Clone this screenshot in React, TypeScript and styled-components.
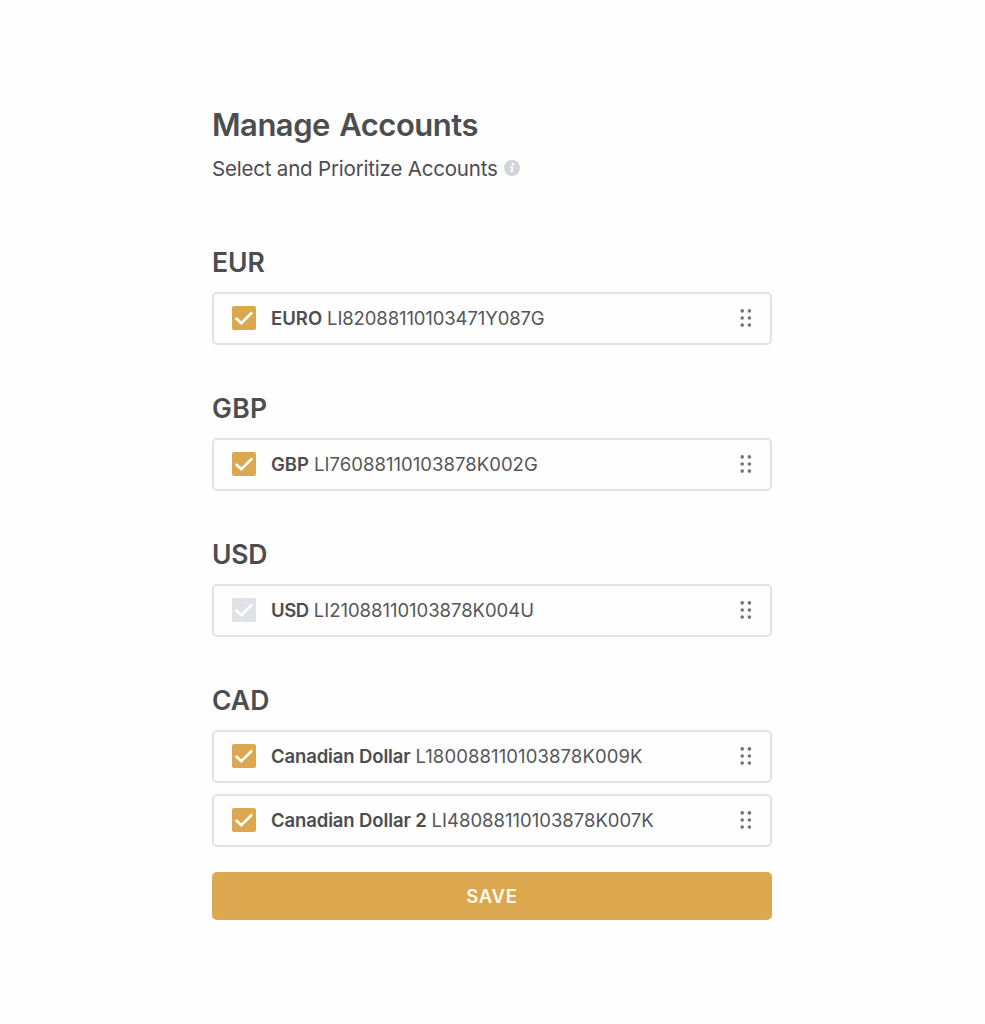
import React from "react";
import styled, { createGlobalStyle } from "styled-components";

const GlobalStyle = createGlobalStyle`
  *, *::before, *::after { box-sizing: border-box; }
  html, body { margin: 0; background: #fefefe; }
  body {
    font-family: Inter, "Liberation Sans", sans-serif;
    color: #4c4d50;
    -webkit-font-smoothing: antialiased;
  }
`;

const Page = styled.main`
  min-height: 1024px;
  padding: 105px 0 0 212px;
`;

const Panel = styled.div`
  width: 560px;
`;

const Title = styled.h1`
  margin: 0;
  font-size: 31px;
  line-height: 40px;
  font-weight: 600;
  letter-spacing: -0.5px;
  word-spacing: 2px;
  white-space: nowrap;
`;

const Subtitle = styled.div`
  display: flex;
  align-items: center;
  gap: 6px;
  height: 30px;
  margin: 8px 0 59px;
  font-size: 20.5px;
  letter-spacing: -0.19px;
  white-space: nowrap;
`;

const Section = styled.section`
  margin-bottom: 43px;

  &:last-of-type {
    margin-bottom: 25px;
  }
`;

const Heading = styled.h2<{ $spacing: number }>`
  margin: 0 0 10px;
  font-size: 26.5px;
  line-height: 40px;
  font-weight: 600;
  letter-spacing: ${(p) => p.$spacing}px;
`;

const Rows = styled.div`
  display: grid;
  gap: 11px;
`;

const Row = styled.label`
  display: flex;
  align-items: center;
  height: 53px;
  padding: 0 17px 1px 18px;
  border: 2px solid #e2e3e4;
  border-radius: 5px;
`;

const Check = styled.span<{ $on: boolean }>`
  display: flex;
  width: 24px;
  height: 24px;
  margin-right: 15px;
  border-radius: 2px;
  background: ${(p) => (p.$on ? "#dba84f" : "#e1e2e8")};
`;

const Name = styled.span<{ $spacing: number }>`
  margin-right: 5px;
  font-size: 18.5px;
  font-weight: 600;
  letter-spacing: ${(p) => p.$spacing}px;
  white-space: nowrap;
`;

const AccountNumber = styled.span<{ $spacing: number }>`
  flex: 1;
  font-size: 18.5px;
  color: #55565a;
  letter-spacing: ${(p) => p.$spacing}px;
  white-space: nowrap;
`;

const SaveButton = styled.button`
  display: block;
  width: 100%;
  height: 48px;
  padding: 0;
  border: 0;
  border-radius: 5px;
  background: #dba84f;
  color: #fffaf0;
  font: 600 18.5px/48px Inter, "Liberation Sans", sans-serif;
  letter-spacing: 0.7px;
`;

const CheckIcon = () => (
  <svg width="24" height="24" viewBox="0 0 24 24" fill="none">
    <path d="M3.8 12 9.3 17.2 20.2 6.4" stroke="#fff" strokeWidth="2.7" />
  </svg>
);

const InfoIcon = () => (
  <svg width="16" height="16" viewBox="0 0 16 16">
    <circle cx="8" cy="8" r="8" fill="#d3d4d7" />
    <circle cx="8.9" cy="4.1" r="1.25" fill="#fff" />
    <path d="M6.3 7h2.2l-1 4.6h1.6" stroke="#fff" strokeWidth="1.5" fill="none" />
  </svg>
);

const DragHandle = () => (
  <svg width="14" height="20" viewBox="0 0 14 20" fill="#737477">
    {[3.2, 10.4].map((x) => [2.9, 10, 17.1].map((y) => <circle key={`${x}-${y}`} cx={x} cy={y} r="1.8" />))}
  </svg>
);

type Account = { name: string; number: string; on: boolean; nameSpacing: number; numberSpacing: number };

const groups: { currency: string; spacing: number; accounts: Account[] }[] = [
  { currency: "EUR", spacing: 0, accounts: [{ name: "EURO", number: "LI82088110103471Y087G", on: true, nameSpacing: 0, numberSpacing: -0.12 }] },
  { currency: "GBP", spacing: 0.4, accounts: [{ name: "GBP", number: "LI76088110103878K002G", on: true, nameSpacing: 0, numberSpacing: 0.04 }] },
  { currency: "USD", spacing: -0.3, accounts: [{ name: "USD", number: "LI21088110103878K004U", on: false, nameSpacing: -0.4, numberSpacing: -0.03 }] },
  {
    currency: "CAD",
    spacing: 0,
    accounts: [
      { name: "Canadian Dollar", number: "L180088110103878K009K", on: true, nameSpacing: -0.13, numberSpacing: 0.1 },
      { name: "Canadian Dollar 2", number: "LI48088110103878K007K", on: true, nameSpacing: -0.12, numberSpacing: 0 },
    ],
  },
];

export default function App() {
  return (
    <Page>
      <GlobalStyle />
      <Panel>
        <Title>Manage Accounts</Title>
        <Subtitle>
          <span>Select and Prioritize Accounts</span>
          <InfoIcon />
        </Subtitle>
        {groups.map((group) => (
          <Section key={group.currency}>
            <Heading $spacing={group.spacing}>{group.currency}</Heading>
            <Rows>
              {group.accounts.map((account) => (
                <Row key={account.number}>
                  <Check $on={account.on}>
                    <CheckIcon />
                  </Check>
                  <Name $spacing={account.nameSpacing}>{account.name}</Name>
                  <AccountNumber $spacing={account.numberSpacing}>{account.number}</AccountNumber>
                  <DragHandle />
                </Row>
              ))}
            </Rows>
          </Section>
        ))}
        <SaveButton type="button">SAVE</SaveButton>
      </Panel>
    </Page>
  );
}
